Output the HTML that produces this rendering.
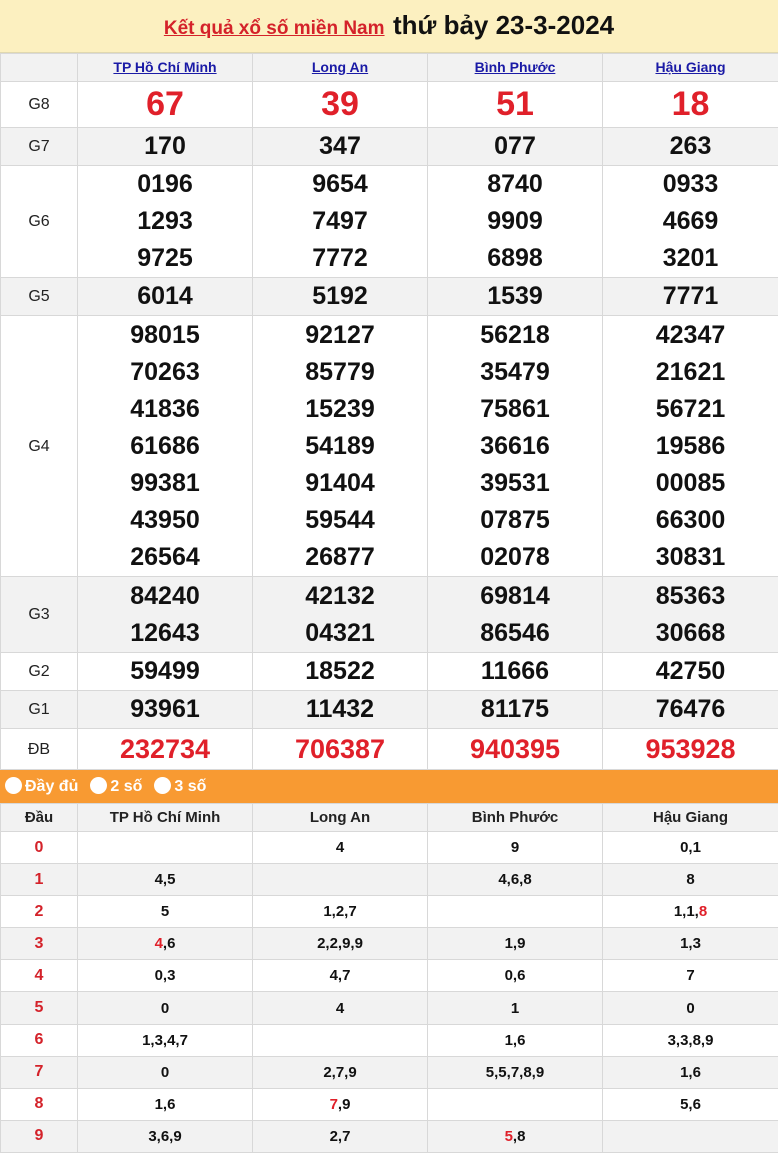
<!DOCTYPE html>
<html><head><meta charset="utf-8">
<style>
*{margin:0;padding:0;box-sizing:border-box}
body{width:778px;height:1153px;background:#fff;font-family:"Liberation Sans",Arial,sans-serif;overflow:hidden}
.hd{height:53px;background:#fcf0c0;text-align:center;line-height:50px;border-bottom:1px solid #e0d8b0}
.hd a{color:#d4222a;font-size:19px;font-weight:bold;text-decoration:underline}
.hd b{font-size:26px;color:#111;margin-left:4px}
table{border-collapse:collapse;table-layout:fixed;width:778px}
td{border:1px solid #d8d8d8;text-align:center;padding:0}
.n td{font-size:25px;font-weight:bold;color:#111;line-height:37px}
.r td:first-child{font-size:16px;color:#222;font-weight:normal}
.g td{background:#f2f2f2}
.ch td{height:28px;background:#f2f2f2}
.ch a{color:#1a1aa6;font-size:14px;font-weight:bold;text-decoration:underline}
.red{color:#e0202a!important}
.bar{height:33px;background:#f89a32;color:#fff;font-weight:bold;font-size:16px;line-height:33px;padding-left:5px}
.bar span{display:inline-block;width:17px;height:17px;border-radius:50%;background:#fff;vertical-align:-3px;margin-right:3px}
.bar i{font-style:normal;margin-right:12px}
.lt td{height:32.1px;font-size:15px;font-weight:bold;color:#111}
.lt td:first-child{color:#d4222a;font-size:16px}
.lh td{height:28px;background:#f2f2f2;font-size:15px;font-weight:bold;color:#222}
</style></head><body>
<div class="hd"><a>Kết quả xổ số miền Nam</a> <b>thứ bảy 23-3-2024</b></div>
<table>
<colgroup><col style="width:77px"><col style="width:175px"><col style="width:175px"><col style="width:175px"><col style="width:176px"></colgroup>
<tr class="ch"><td></td><td><a>TP Hồ Chí Minh</a></td><td><a>Long An</a></td><td><a>Bình Phước</a></td><td><a>Hậu Giang</a></td></tr>
<tr class="r n" style="height:46px"><td>G8</td><td class="red" style="font-size:34px">67</td><td class="red" style="font-size:34px">39</td><td class="red" style="font-size:34px">51</td><td class="red" style="font-size:34px">18</td></tr>
<tr class="r n g" style="height:38px"><td>G7</td><td>170</td><td>347</td><td>077</td><td>263</td></tr>
<tr class="r n" style="height:112px"><td>G6</td><td>0196<br>1293<br>9725</td><td>9654<br>7497<br>7772</td><td>8740<br>9909<br>6898</td><td>0933<br>4669<br>3201</td></tr>
<tr class="r n g" style="height:38px"><td>G5</td><td>6014</td><td>5192</td><td>1539</td><td>7771</td></tr>
<tr class="r n" style="height:261px"><td>G4</td><td>98015<br>70263<br>41836<br>61686<br>99381<br>43950<br>26564</td><td>92127<br>85779<br>15239<br>54189<br>91404<br>59544<br>26877</td><td>56218<br>35479<br>75861<br>36616<br>39531<br>07875<br>02078</td><td>42347<br>21621<br>56721<br>19586<br>00085<br>66300<br>30831</td></tr>
<tr class="r n g" style="height:76px"><td>G3</td><td>84240<br>12643</td><td>42132<br>04321</td><td>69814<br>86546</td><td>85363<br>30668</td></tr>
<tr class="r n" style="height:38px"><td>G2</td><td>59499</td><td>18522</td><td>11666</td><td>42750</td></tr>
<tr class="r n g" style="height:38px"><td>G1</td><td>93961</td><td>11432</td><td>81175</td><td>76476</td></tr>
<tr class="r n" style="height:41px"><td>ĐB</td><td class="red" style="font-size:27px">232734</td><td class="red" style="font-size:27px">706387</td><td class="red" style="font-size:27px">940395</td><td class="red" style="font-size:27px">953928</td></tr>
</table>
<div class="bar"><span></span><i>Đầy đủ</i><span></span><i>2 số</i><span></span><i>3 số</i></div>
<table>
<colgroup><col style="width:77px"><col style="width:175px"><col style="width:175px"><col style="width:175px"><col style="width:176px"></colgroup>
<tr class="lh"><td>Đầu</td><td>TP Hồ Chí Minh</td><td>Long An</td><td>Bình Phước</td><td>Hậu Giang</td></tr>
<tr class="lt"><td>0</td><td></td><td>4</td><td>9</td><td>0,1</td></tr>
<tr class="lt g"><td>1</td><td>4,5</td><td></td><td>4,6,8</td><td>8</td></tr>
<tr class="lt"><td>2</td><td>5</td><td>1,2,7</td><td></td><td>1,1,<span class="red">8</span></td></tr>
<tr class="lt g"><td>3</td><td><span class="red">4</span>,6</td><td>2,2,9,9</td><td>1,9</td><td>1,3</td></tr>
<tr class="lt"><td>4</td><td>0,3</td><td>4,7</td><td>0,6</td><td>7</td></tr>
<tr class="lt g"><td>5</td><td>0</td><td>4</td><td>1</td><td>0</td></tr>
<tr class="lt"><td>6</td><td>1,3,4,7</td><td></td><td>1,6</td><td>3,3,8,9</td></tr>
<tr class="lt g"><td>7</td><td>0</td><td>2,7,9</td><td>5,5,7,8,9</td><td>1,6</td></tr>
<tr class="lt"><td>8</td><td>1,6</td><td><span class="red">7</span>,9</td><td></td><td>5,6</td></tr>
<tr class="lt g"><td>9</td><td>3,6,9</td><td>2,7</td><td><span class="red">5</span>,8</td><td></td></tr>
</table>
</body></html>
